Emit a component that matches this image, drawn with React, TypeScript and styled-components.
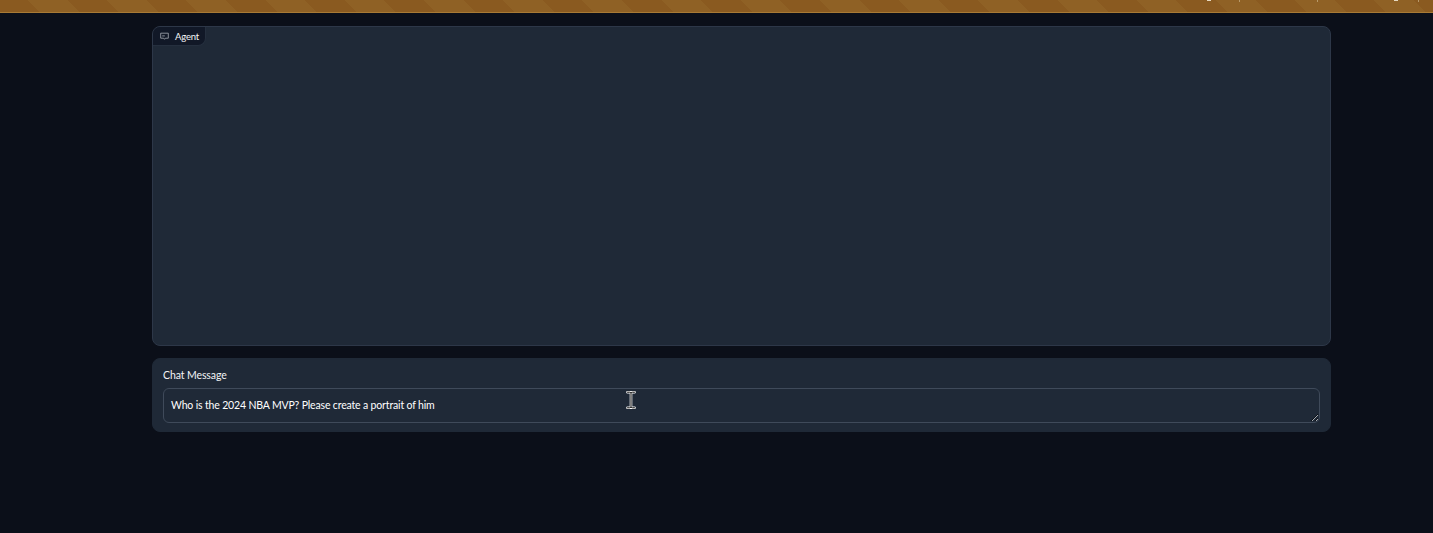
import { FC } from 'react';
import styled, { createGlobalStyle } from 'styled-components';

const GlobalStyle = createGlobalStyle`
  html, body {
    margin: 0;
    padding: 0;
    height: 100%;
    overflow: hidden;
    background: #0b0f19;
  }
`;

const Bubble: FC = () => (
  <svg width="9" height="9" viewBox="0 0 9 9" fill="none" stroke="#a8adb5" strokeWidth="0.8">
    <path d="M0.7 1.2h7.6v5H5.3L4.5 7.3 3.7 6.2H0.7z" />
    <path d="M2.2 3.9h2.6" />
  </svg>
);

const IBEAM_PATH =
  'M1.5 1.2h2c.7 0 1.2.3 1.5.8.3-.5.8-.8 1.5-.8h2M5 2v14M1.5 16.8h2c.7 0 1.2-.3 1.5-.8.3.5.8.8 1.5.8h2';

const IBeam: FC = () => (
  <svg width="10" height="18" viewBox="0 0 10 18" fill="none">
    <path d={IBEAM_PATH} stroke="#fff" strokeWidth="2.6" strokeLinecap="round" />
    <path d={IBEAM_PATH} stroke="#000" strokeWidth="1" strokeLinecap="round" />
  </svg>
);

// the banner text is cut off by the top of the window, only these bits are left of it
const bannerCells = [
  { width: 35, dotInset: 2 },
  { width: 78, dotInset: null },
  { width: 101, dotInset: 76 },
];

const App: FC = () => (
  <Page>
    <GlobalStyle />
    <Banner>
      {bannerCells.map((cell, i) => (
        <BannerCell key={i} $width={cell.width} $inset={cell.dotInset ?? 0}>
          {cell.dotInset !== null && <BannerDot />}
        </BannerCell>
      ))}
    </Banner>
    <Main>
      <ChatPanel>
        <PanelTag>
          <Bubble />
          Agent
        </PanelTag>
      </ChatPanel>
      <InputPanel>
        <FieldLabel>Chat Message</FieldLabel>
        <InputWrap>
          <MessageBox readOnly rows={1} value="Who is the 2024 NBA MVP? Please create a portrait of him" />
          <Cursor>
            <IBeam />
          </Cursor>
        </InputWrap>
      </InputPanel>
    </Main>
  </Page>
);

const Page = styled.div`
  min-height: 533px;
  background: #0b0f19;
  font-family: 'Lato', 'Noto Sans', sans-serif;
`;

const Banner = styled.div`
  display: flex;
  justify-content: flex-end;
  height: 12px;
  padding-right: 14px;
  border-bottom: 1px solid #a87a35;
  background: repeating-linear-gradient(
    45deg,
    #8a5a20 0 28px,
    #8f6125 28px 56px
  );
`;

const BannerCell = styled.div<{ $width: number; $inset: number }>`
  box-sizing: border-box;
  display: flex;
  width: ${({ $width }) => $width}px;
  height: 2px;
  padding-left: ${({ $inset }) => $inset}px;
  border-right: 1px solid #b89a6a;
`;

const BannerDot = styled.span`
  width: 4px;
  height: 1px;
  background: #e6d8c0;
`;

const Main = styled.main`
  display: flex;
  flex-direction: column;
  gap: 12px;
  width: 1179px;
  margin: 13px 0 0 152px;
`;

const ChatPanel = styled.section`
  box-sizing: border-box;
  display: flex;
  align-items: flex-start;
  height: 320px;
  border: 1px solid #2d3748;
  border-radius: 8px;
  background: #1f2937;
`;

const PanelTag = styled.div`
  box-sizing: border-box;
  display: flex;
  align-items: center;
  gap: 6px;
  height: 19px;
  padding: 0 6px 0 7px;
  border-right: 1px solid #252f3e;
  border-bottom: 1px solid #252f3e;
  border-radius: 7px 0 8px 0;
  background: #111827;
  color: #f3f4f6;
  font-size: 9.5px;
  letter-spacing: -0.2px;
`;

const InputPanel = styled.section`
  box-sizing: border-box;
  height: 74px;
  padding: 9px 10px 8px;
  border: 1px solid #1f2937;
  border-radius: 8px;
  background: #1f2937;
`;

const FieldLabel = styled.div`
  height: 15px;
  margin-bottom: 5px;
  color: #f3f4f6;
  font-size: 10.5px;
  letter-spacing: -0.1px;
  line-height: 15px;
`;

const InputWrap = styled.div`
  position: relative;
`;

const MessageBox = styled.textarea`
  display: block;
  box-sizing: border-box;
  width: 100%;
  height: 35px;
  padding: 9px 7px 7px;
  border: 1px solid #3f4a5a;
  border-radius: 6px;
  outline: none;
  background: #1f2937;
  color: #ffffff;
  font-family: inherit;
  font-size: 10.5px;
  letter-spacing: -0.16px;
  line-height: 15px;
  resize: vertical;
`;

const Cursor = styled.div`
  position: absolute;
  top: 3px;
  left: 463px;
  line-height: 0;
`;

export default App;
